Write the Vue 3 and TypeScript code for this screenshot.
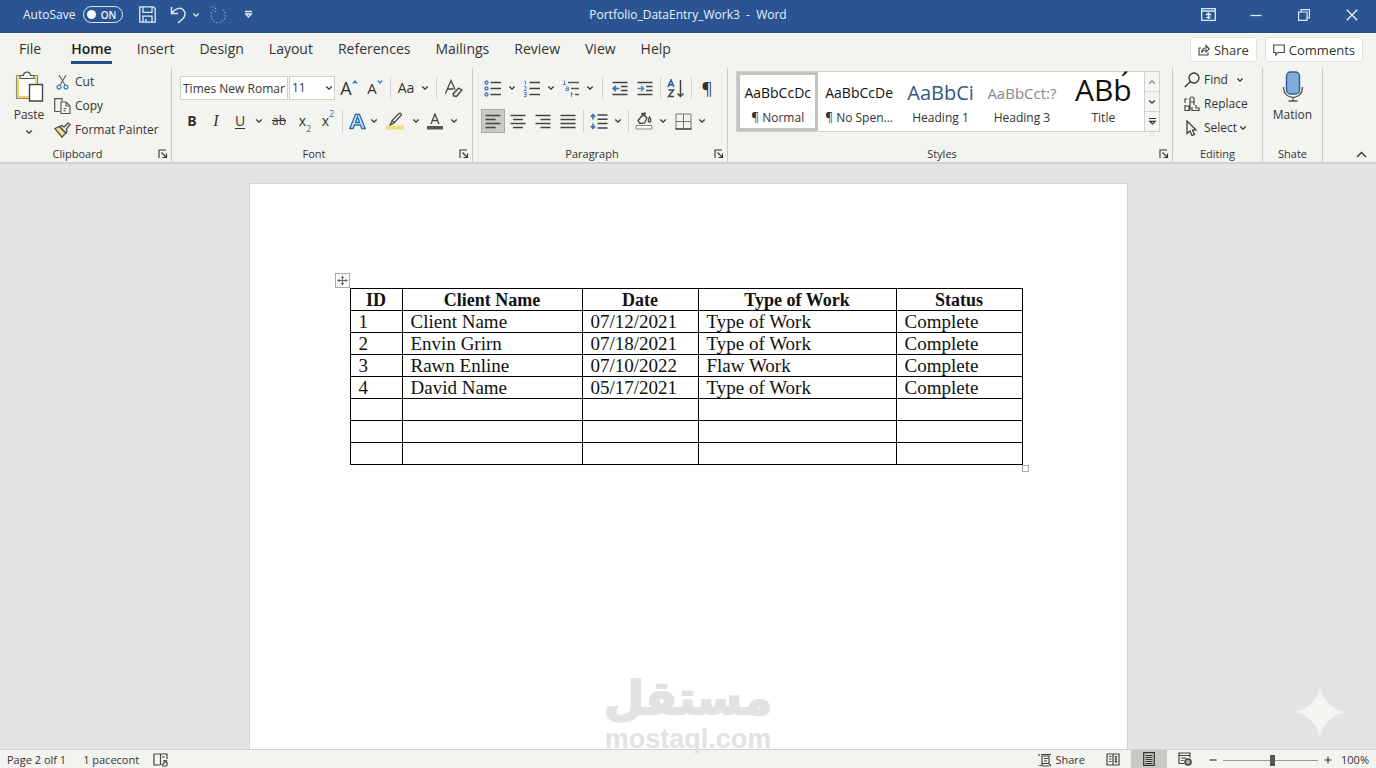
<script setup lang="ts">
import { ref } from 'vue'

interface Entry { id: string; client: string; date: string; work: string; status: string }
interface StyleTile { sample: string; name: string; kind: string }

const tabs: string[] = ['File', 'Home', 'Insert', 'Design', 'Layout', 'References', 'Mailings', 'Review', 'View', 'Help']
const activeTab = ref('Home')
const fontName = ref('Times New Roman')
const fontSize = ref('11')
const zoom = ref(52)

const tiles: StyleTile[] = [
  { sample: 'AaBbCcDc', name: '¶ Normal', kind: 'plain' },
  { sample: 'AaBbCcDe', name: '¶ No Spen...', kind: 'plain' },
  { sample: 'AaBbCi', name: 'Heading 1', kind: 'heading1' },
  { sample: 'AaBbCct:?', name: 'Heading 3', kind: 'heading3' },
  { sample: 'ABb\u0301', name: 'Title', kind: 'title' },
]
const activeTile = ref('¶ Normal')

const columns: string[] = ['ID', 'Client Name', 'Date', 'Type of Work', 'Status']
const blank: Entry = { id: '', client: '', date: '', work: '', status: '' }
const entries: Entry[] = [
  { id: '1', client: 'Client Name', date: '07/12/2021', work: 'Type of Work', status: 'Complete' },
  { id: '2', client: 'Envin Grirn', date: '07/18/2021', work: 'Type of Work', status: 'Complete' },
  { id: '3', client: 'Rawn Enline', date: '07/10/2022', work: 'Flaw Work', status: 'Complete' },
  { id: '4', client: 'David Name', date: '05/17/2021', work: 'Type of Work', status: 'Complete' },
  blank, blank, blank,
]
</script>

<template>
  <div class="app">
    <svg class="defs" aria-hidden="true">
      <symbol id="chev" viewBox="0 0 8 8"><path d="M1.3 2.5 4 5.2 6.7 2.5" fill="none" stroke="currentColor" stroke-width="1.3" /></symbol>
      <symbol id="launch" viewBox="0 0 10 10"><path d="M1 9V1h7M3.5 3.5l4.5 4.5M8.5 4.5v4h-4" fill="none" stroke="currentColor" stroke-width="1.1" /></symbol>
    </svg>

    <header class="titlebar">
      <div class="quick">
        <label class="autosave">AutoSave
          <input class="toggle-input" type="checkbox" checked />
          <span class="toggle"><i class="dot"></i>ON</span>
        </label>
        <button class="tb save" aria-label="Save">
          <svg width="17" height="17" viewBox="0 0 17 17" fill="none" stroke="#dcebfa" stroke-width="1.3"><path d="M.8.8h13.6l1.8 1.8v13.6H.8zM4 .8v5.6h9V.8M4 16v-5.8h9V16M7 16v-3" /></svg>
        </button>
        <button class="tb undo" aria-label="Undo">
          <svg width="17" height="18" viewBox="0 0 17 18" fill="none" stroke="#dcebfa" stroke-width="1.5"><path d="M1.5 1v6.5H8M1.8 7.2C5 2.500 10 .8 13.500 4c3 3 1.500 7-1.500 9.500L8 17" /></svg>
        </button>
        <button class="tb tiny" aria-label="Undo list"><svg class="chev"><use href="#chev" /></svg></button>
        <button class="tb redo" aria-label="Redo">
          <svg width="18" height="18" viewBox="0 0 18 18" fill="none" stroke="#8eaede" stroke-width="1.200" stroke-dasharray="1.200 1.800"><path d="M1.500 1h5v5M4.500 4a7.200 7.200 0 1 0 9.500 0" /></svg>
        </button>
        <button class="tb" aria-label="Customize toolbar">
          <svg width="9" height="9" viewBox="0 0 9 9" fill="none" stroke="#dcebfa" stroke-width="1.300"><path d="M1 1.500h7M1.700 4h5.600L4.500 7z" /></svg>
        </button>
      </div>
      <h1 class="doc-name">Portfolio_DataEntry_Work3&nbsp; -&nbsp; Word</h1>
      <div class="window-buttons">
        <button aria-label="Ribbon display options">
          <svg width="15" height="13" viewBox="0 0 15 13" fill="none" stroke="#dcebfa" stroke-width="1.300"><path d="M.7.700h13.600v11.600H.7zM.7 3h13.600M7.500 11V5M5 7.300l2.500-2.500L10 7.300M5.500 9.500h4" /></svg>
        </button>
        <button aria-label="Minimize"><svg width="12" height="12" viewBox="0 0 12 12" stroke="#dcebfa" stroke-width="1.300"><path d="M.5 6.500h11" /></svg></button>
        <button aria-label="Restore"><svg width="12" height="12" viewBox="0 0 12 12" fill="none" stroke="#dcebfa" stroke-width="1.200"><path d="M.6 3h8.400v8.400H.6zM3 3V.600h8.400V9H9" /></svg></button>
        <button aria-label="Close"><svg width="12" height="12" viewBox="0 0 12 12" stroke="#e8f2fc" stroke-width="1.300"><path d="M.8.800l10.400 10.400M11.200.800.800 11.200" /></svg></button>
      </div>
    </header>

    <nav class="tabs">
      <button v-for="t in tabs" :key="t" class="tab" :class="{ active: t === activeTab }" @click="activeTab = t"><span>{{ t }}</span></button>
      <div class="tab-actions">
        <button class="card-btn">
          <svg width="12" height="12" viewBox="0 0 12 12" fill="none" stroke="#444" stroke-width="1.100"><path d="M3 4H1v7h9V8.500M3.500 8.500c0-3 2-4.500 4.500-4.500V1.500l3.300 3.500L8 8V6C6 6 4.500 6.500 3.500 8.500z" /></svg>Share
        </button>
        <button class="card-btn">
          <svg width="12" height="12" viewBox="0 0 12 12" fill="none" stroke="#444" stroke-width="1.100"><path d="M.7 1h10.600v7.500H5L2.700 11V8.500H.7z" /></svg>Comments
        </button>
      </div>
    </nav>

    <section class="ribbon">
      <div class="group clipboard">
        <div class="body clip-body">
          <button class="paste">
            <svg width="29" height="31" viewBox="0 0 29 31" fill="none"><path d="M1.500 4.500h21v23h-21z" fill="#fbfbf8" stroke="#8a8a80" stroke-width="1.100" /><path d="M3 6v20h11M21 6v6" stroke="#f0d264" stroke-width="2" /><path d="M5 7.500V4.500h3.500c0-4.500 7-4.500 7 0H19v3z" fill="#f6f6f3" stroke="#555" stroke-width="1.200" /><path d="M14.500 13.500h13V30h-13z" fill="#fff" stroke="#444" stroke-width="1.400" /></svg>
            Paste
            <svg class="chev"><use href="#chev" /></svg>
          </button>
          <div class="stack clip-stack">
            <button class="row-btn">
              <svg width="17" height="16" viewBox="0 0 17 16" fill="none"><path d="M5 1l6 10M12 1 6 11" stroke="#666" stroke-width="1.200" /><circle cx="5" cy="13" r="1.900" stroke="#3f7dbf" stroke-width="1.300" /><circle cx="12" cy="13" r="1.900" stroke="#3f7dbf" stroke-width="1.300" /></svg>Cut
            </button>
            <button class="row-btn">
              <svg width="17" height="16" viewBox="0 0 17 16" fill="none" stroke="#555" stroke-width="1.200"><path d="M6 13.500H.700V.700H8v2.500" /><path d="M7 4h5l4 4v7.500H7z" fill="#fafaf8" /><path d="M12 4v4h4M9.500 10.500h3M9.500 12.700h2" /></svg>Copy
            </button>
            <button class="row-btn">
              <svg width="17" height="16" viewBox="0 0 17 16"><path d="M.8 6.500 5.500 4.500 12 11 8 15.200z" fill="#f2dc83" stroke="#4a4a4a" stroke-width="1.200" /><path d="M5.500 4.500 8 3.500l2 1.500L14 1l2 1.500-3.500 4.500.5 2.500L12 11z" fill="#e6e6e0" stroke="#444" stroke-width="1.200" /></svg>Format Painter
            </button>
          </div>
        </div>
        <footer><span>Clipboard</span><button class="launcher" aria-label="Clipboard options"><svg><use href="#launch" /></svg></button></footer>
      </div>

      <div class="group font">
        <div class="body two-rows">
          <div class="tools">
            <input v-model="fontName" class="font-name" aria-label="Font" />
            <span class="size-wrap">
              <select v-model="fontSize" aria-label="Font size"><option>10</option><option>11</option><option>12</option><option>14</option></select>
              <svg class="chev"><use href="#chev" /></svg>
            </span>
            <button class="t w28 big" aria-label="Grow font">A<svg class="caret" viewBox="0 0 6 4"><path d="M.8 3.500 3 1l2.200 2.500" /></svg></button>
            <button class="t w24 mid" aria-label="Shrink font">A<svg class="caret" viewBox="0 0 6 4"><path d="M.8.500 3 3 5.200.500" /></svg></button>
            <i class="sep narrow"></i>
            <button class="t w24 case">Aa</button><button class="t w14" aria-label="Change case"><svg class="chev"><use href="#chev" /></svg></button>
            <i class="sep"></i>
            <button class="t w24" aria-label="Clear formatting">
              <svg width="19" height="19" viewBox="0 0 19 19" fill="none" stroke="#444" stroke-width="1.300"><path d="M1.500 14.500 7 1.500l4 9M3.500 10h6" /><path d="m9 15 5.500-6 3.500 2-5.500 6.500-3-.500z" fill="#ddd" /></svg>
            </button>
          </div>
          <div class="tools">
            <button class="t w24 bold">B</button><button class="t w24 ital">I</button><button class="t w24 under">U</button><button class="t w14" aria-label="Underline style"><svg class="chev"><use href="#chev" /></svg></button>
            <button class="t w26 strike">ab</button>
            <button class="t w26 script">x<sub>2</sub></button><button class="t w20 script">x<sup>2</sup></button>
            <i class="sep"></i>
            <button class="t w20" aria-label="Text effects">
              <svg width="17" height="17" viewBox="0 0 17 17" fill="#cfe3f5" stroke="#2f69ad" stroke-width="1.300"><path d="M.8 15.500 6.500 1.500h4l5.700 14h-3.400l-1.300-3.500h-6L4.200 15.500zM6.500 9.500h4L8.500 4z" /></svg>
            </button><button class="t w14" aria-label="Effects list"><svg class="chev"><use href="#chev" /></svg></button>
            <button class="t w28" aria-label="Highlight">
              <svg width="20" height="18" viewBox="0 0 20 18"><path d="M1 13.500h18v4H1z" fill="#f3df77" /><path d="M5 13l2-4.500 7-7c1.500-1 3 .5 2 2l-7 7.500zM7 8.500l2.500 2.500" fill="#f4f4f0" stroke="#444" stroke-width="1.200" /></svg>
            </button><button class="t w14" aria-label="Highlight color"><svg class="chev"><use href="#chev" /></svg></button>
            <button class="t w24" aria-label="Font color">
              <svg width="18" height="17" viewBox="0 0 18 17"><path d="M5 11 9 1l4 10M6.300 7.700h5.400" fill="none" stroke="#444" stroke-width="1.300" /><path d="M1 13h16v3.500H1z" fill="#555" /></svg>
            </button><button class="t w14" aria-label="Font color list"><svg class="chev"><use href="#chev" /></svg></button>
          </div>
        </div>
        <footer><span>Font</span><button class="launcher" aria-label="Font options"><svg><use href="#launch" /></svg></button></footer>
      </div>

      <div class="group paragraph">
        <div class="body two-rows">
          <div class="tools spaced">
            <button class="t w24" aria-label="Bullets"><svg width="18" height="17" viewBox="0 0 18 17" fill="none" stroke="#444" stroke-width="1.400"><path d="M6.500 2.500H17M6.500 8.500H17M6.500 14.500H17" /><g stroke="#3d7cc0" stroke-width="1.300"><circle cx="2.500" cy="2.500" r="1.500" /><circle cx="2.500" cy="8.500" r="1.500" /><circle cx="2.500" cy="14.500" r="1.500" /></g></svg></button><button class="t w14" aria-label="Bullet list"><svg class="chev"><use href="#chev" /></svg></button>
            <button class="t w24" aria-label="Numbering"><svg width="18" height="17" viewBox="0 0 18 17" fill="none" stroke="#444" stroke-width="1.400"><path d="M6.500 2.500H17M6.500 8.500H17M6.500 14.500H17" /><path d="M1.500 1h1v3.500M1 6.500h2v2l-2 2h2.500M1 12.500h2.300v4H1M1 14.500h2" stroke="#5e88b5" stroke-width="1" /></svg></button><button class="t w14" aria-label="Number list"><svg class="chev"><use href="#chev" /></svg></button>
            <button class="t w24" aria-label="Multilevel list"><svg width="18" height="17" viewBox="0 0 18 17" fill="none" stroke="#555" stroke-width="1.300"><path d="M6 2.500h11M9 8.500h8M13 14.500h4" /><path d="M1.500 1h1v3.500M1 4.500h3M4 7h2.500v3.500H4V8.500h2M9.500 12v5M8.500 14h2.500" stroke="#5e88b5" stroke-width="1" /></svg></button><button class="t w14" aria-label="Multilevel choices"><svg class="chev"><use href="#chev" /></svg></button>
            <i class="sep"></i>
            <button class="t w24" aria-label="Decrease indent"><svg width="16" height="15" viewBox="0 0 16 15" fill="none" stroke="#444" stroke-width="1.400"><path d="M.5 1.500h15M9 5.500h6.500M9 9.500h6.500M.5 13.500h15" /><path d="M7.500 7.500H1.500M4 4.800 1.300 7.500 4 10.200" stroke="#3574b8" stroke-width="1.700" /></svg></button>
            <button class="t w24" aria-label="Increase indent"><svg width="16" height="15" viewBox="0 0 16 15" fill="none" stroke="#444" stroke-width="1.400"><path d="M.5 1.500h15M9 5.500h6.500M9 9.500h6.500M.5 13.500h15" /><path d="M.5 7.500h6M4 4.800l2.700 2.700L4 10.200" stroke="#4f86bb" stroke-width="1.300" /></svg></button>
            <i class="sep tight"></i>
            <button class="t w24" aria-label="Sort"><svg width="18" height="19" viewBox="0 0 18 19" fill="none" stroke-width="1.500"><path d="M1 8 4 1l3 7M2 5.800h4" stroke="#2f69ad" stroke-width="1.700" /><path d="M1.500 11h5l-5 6.500H7M13.500 1v16.500M10.500 14.500l3 3 3-3" stroke="#444" /></svg></button>
            <i class="sep tight"></i>
            <button class="t w24 pilcrow">¶</button>
          </div>
          <div class="tools spaced">
            <button class="t w24 pressed" aria-label="Align left"><svg width="16" height="15" viewBox="0 0 16 15" stroke="#444" stroke-width="1.500"><path d="M.5 1.500h15M.5 5.500h10M.5 9.500h15M.5 13.500h10" /></svg></button>
            <button class="t w24" aria-label="Center"><svg width="16" height="15" viewBox="0 0 16 15" stroke="#444" stroke-width="1.500"><path d="M.5 1.500h15M3 5.500h10M.5 9.500h15M3 13.500h10" /></svg></button>
            <button class="t w24" aria-label="Align right"><svg width="16" height="15" viewBox="0 0 16 15" stroke="#444" stroke-width="1.500"><path d="M.5 1.500h15M5.500 5.500h10M.5 9.500h15M5.500 13.500h10" /></svg></button>
            <button class="t w24" aria-label="Justify"><svg width="16" height="15" viewBox="0 0 16 15" stroke="#444" stroke-width="1.500"><path d="M.5 1.500h15M.5 5.500h15M.5 9.500h15M.5 13.500h15" /></svg></button>
            <i class="sep tight"></i>
            <button class="t w24" aria-label="Line spacing"><svg width="18" height="17" viewBox="0 0 18 17" fill="none" stroke="#444" stroke-width="1.500"><path d="M7.500 2h10M7.500 6.300h10M7.500 10.600h10M7.500 15h10" /><path d="M3 1.500v5M3 10.500v5M.8 4 3 1.500 5.200 4M.8 13 3 15.500 5.200 13" stroke="#3a75b5" stroke-width="1.600" /></svg></button><button class="t w14" aria-label="Line spacing list"><svg class="chev"><use href="#chev" /></svg></button>
            <i class="sep tight"></i>
            <button class="t w24" aria-label="Shading"><svg width="18" height="18" viewBox="0 0 18 18" fill="none" stroke="#444" stroke-width="1.300"><path d="M3 8.500 8 2.500 12 6 9.500 11 5 11.500zM7 5V1.500l3-.500v4M14.500 5c2 3 1.500 5 0 5s-1.500-2.500 0-5z" /><path d="M1 13.500h16v3.500H1z" fill="#fff" stroke="#888" stroke-width="1" /></svg></button><button class="t w14" aria-label="Shading list"><svg class="chev"><use href="#chev" /></svg></button>
            <button class="t w24" aria-label="Borders"><svg width="17" height="17" viewBox="0 0 17 17" fill="none" stroke="#777" stroke-width="1"><path d="M1 16V1h15v15M8.500 1v15M1 8.500h15" /><path d="M.5 16h16" stroke="#444" stroke-width="1.600" /></svg></button><button class="t w14" aria-label="Borders list"><svg class="chev"><use href="#chev" /></svg></button>
          </div>
        </div>
        <footer><span>Paragraph</span><button class="launcher" aria-label="Paragraph options"><svg><use href="#launch" /></svg></button></footer>
      </div>

      <div class="group styles">
        <div class="body">
          <div class="gallery">
            <button v-for="s in tiles" :key="s.name" class="tile" :class="{ chosen: s.name === activeTile }" @click="activeTile = s.name">
              <span class="sample" :class="s.kind">{{ s.sample }}</span>
              <span>{{ s.name }}</span>
            </button>
            <div class="scroller">
              <button class="faded" aria-label="Previous styles"><svg class="chev flip"><use href="#chev" /></svg></button>
              <button aria-label="Next styles"><svg class="chev"><use href="#chev" /></svg></button>
              <button aria-label="All styles"><svg width="9" height="9" viewBox="0 0 9 9" fill="none" stroke="#333" stroke-width="1.200"><path d="M1 1.500h7M1.800 4.300h5.400L4.500 7z" /></svg></button>
            </div>
          </div>
        </div>
        <footer><span>Styles</span><button class="launcher" aria-label="Styles options"><svg><use href="#launch" /></svg></button></footer>
      </div>

      <div class="group editing">
        <div class="body stack">
          <button class="row-btn"><svg width="16" height="16" viewBox="0 0 16 16" fill="none" stroke="#333" stroke-width="1.300"><circle cx="10" cy="6" r="5" /><path d="M6.500 9.500.8 15" /></svg>Find<svg class="chev far"><use href="#chev" /></svg></button>
          <button class="row-btn"><svg width="16" height="16" viewBox="0 0 16 16" fill="none" stroke="#444" stroke-width="1.200"><path d="M3.500 3H1v4M1 9v5.500h4V10H1M6 14.500V2.500c0-2 4-2 4 0V9M6 6h4M8 11v3.500h7V12h-3V9" /></svg>Replace</button>
          <button class="row-btn"><svg width="16" height="16" viewBox="0 0 16 16" fill="none" stroke="#333" stroke-width="1.200"><path d="M3 1v12.500L6 11l2 4.500 2.500-1L8.500 10H12z" /></svg>Select<svg class="chev near"><use href="#chev" /></svg></button>
        </div>
        <footer><span>Editing</span></footer>
      </div>

      <div class="group voice">
        <div class="body">
          <button class="mic">
            <svg width="22" height="31" viewBox="0 0 22 31" fill="none"><rect x="4.500" y="1" width="13" height="22" rx="4" fill="#80abdb" stroke="#2e5f99" stroke-width="1.400" /><path d="M1.500 16c0 14 19 14 19 0M11 26.500V30M6.500 30h9" stroke="#555" stroke-width="1.300" /></svg>
            Mation
          </button>
        </div>
        <footer><span>Shate</span></footer>
      </div>
      <button class="collapse" aria-label="Collapse the ribbon"><svg width="11" height="7" viewBox="0 0 11 7" fill="none" stroke="#333" stroke-width="1.400"><path d="M1 6l4.500-4.500L10 6" /></svg></button>
    </section>

    <main class="canvas">
      <article class="page">
        <div class="table-box">
          <button class="move" aria-label="Move table"><svg width="11" height="11" viewBox="0 0 11 11" fill="none" stroke="#666" stroke-width="1"><path d="M5.500.500v10M.5 5.500h10M4 2.500h3M4 8.500h3M2.500 4 1 5.500 2.500 7M8.500 4 10 5.500 8.500 7" /></svg></button>
          <table>
            <colgroup><col class="c-id" /><col class="c-client" /><col class="c-date" /><col class="c-work" /><col class="c-status" /></colgroup>
            <thead><tr><th v-for="c in columns" :key="c" scope="col">{{ c }}</th></tr></thead>
            <tbody>
              <tr v-for="(e, i) in entries" :key="i"><td>{{ e.id }}</td><td>{{ e.client }}</td><td>{{ e.date }}</td><td>{{ e.work }}</td><td>{{ e.status }}</td></tr>
            </tbody>
          </table>
          <i class="resize"></i>
        </div>
      </article>
      <div class="watermark"><span class="mark-ar" lang="ar" dir="rtl">مستقل</span><span class="mark-en">mostaql.com</span></div>
      <svg class="sparkle" width="48" height="48" viewBox="0 0 48 48"><path d="M24 0C28 13 35 20 48 24 35 28 28 35 24 48 20 35 13 28 0 24 13 20 20 13 24 0z" fill="#f4f4f1" /></svg>
    </main>

    <footer class="status">
      <span>Page 2 olf 1</span><span class="words">1 pacecont</span>
      <button aria-label="Proofing"><svg width="16" height="14" viewBox="0 0 16 14" fill="none" stroke="#444" stroke-width="1.200"><path d="M7.500 12H1V1h6.500v11M7.500 1H14v5M9 4h3M9 12l5-5M10 8c3-2 6 4 3 5H9" /></svg></button>
      <div class="status-right">
        <button class="share-view"><svg width="14" height="14" viewBox="0 0 14 14" fill="none" stroke="#444" stroke-width="1.200"><path d="M3 1.500h10M4 3h7v7.500H4zM6 5.500h4M6 8h3M1 1v2M1 12v1M2.500 13l2-2M13 13l-2-2M4 13h7" /></svg>Share</button>
        <button class="view" aria-label="Read mode"><svg width="14" height="13" viewBox="0 0 14 13" fill="none" stroke="#444" stroke-width="1.200"><path d="M1 1h12v11H1zM7 1v11M3 3.500h2.500M3 6h2.500M3 8.500h2.500M8.500 3.500H11M8.500 6H11M8.500 8.500H11M10 3v7" /></svg></button>
        <button class="view on" aria-label="Print layout"><svg width="12" height="14" viewBox="0 0 12 14" fill="none" stroke="#333" stroke-width="1.200"><path d="M.7.700h10.600v12.600H.7zM2.500 3.500h7M2.500 5.500h7M2.500 7.500h7M2.500 9.500h7M2.500 11.500h7" /></svg></button>
        <button class="view" aria-label="Web layout"><svg width="14" height="14" viewBox="0 0 14 14" fill="none" stroke="#444" stroke-width="1.200"><path d="M6 11.500H1V1h11v4.500M1 3.500h11M3 6h5M3 8.500h2.500" /><circle cx="10" cy="10" r="3" fill="#aaa" stroke-width="1.600" /></svg></button>
        <button class="step" aria-label="Zoom out"><svg width="8" height="8" viewBox="0 0 8 8" stroke="#333" stroke-width="1.200"><path d="M.5 4h7" /></svg></button>
        <input v-model="zoom" type="range" min="0" max="100" aria-label="Zoom" />
        <button class="step" aria-label="Zoom in"><svg width="8" height="8" viewBox="0 0 8 8" stroke="#333" stroke-width="1.200"><path d="M.5 4h7M4 .500v7" /></svg></button>
        <span class="percent">100%</span>
      </div>
    </footer>
  </div>
</template>

<style>
body { margin: 0; overflow: hidden; }
</style>

<style scoped>
* { box-sizing: border-box; }
.app { height: 100vh; display: flex; flex-direction: column; font-family: "Open Sans", "Noto Sans", sans-serif; font-size: 12px; line-height: 16px; color: #333; background: #e4e4e4; }
.defs { position: absolute; width: 0; height: 0; }
button { border: 0; padding: 0; margin: 0; background: none; font: inherit; color: inherit; display: flex; align-items: center; justify-content: center; flex: none; }
svg { flex: none; display: block; }
.chev { width: 8px; height: 8px; }
.flip { transform: rotate(180deg); }

.titlebar { height: 33px; background: #2b5592; border-bottom: 1px solid #244a80; color: #e6f1fc; display: grid; grid-template-columns: 1fr auto 1fr; align-items: center; padding-bottom: 3px; flex: none; }
.quick { display: flex; align-items: center; padding-left: 23px; }
.autosave { display: flex; align-items: center; gap: 8px; position: relative; }
.toggle-input { position: absolute; opacity: 0; right: 0; width: 40px; height: 17px; margin: 0; }
.toggle { width: 40px; height: 17px; border: 1px solid #dcebfa; border-radius: 9px; display: flex; align-items: center; justify-content: space-between; padding: 0 6px 0 3px; font-size: 10px; font-weight: 600; }
.dot { width: 9px; height: 9px; border-radius: 50%; background: #fff; }
.tb { width: 24px; height: 24px; }
.save { margin-left: 12px; }
.undo { margin-left: 7px; }
.tb.tiny { width: 12px; }
.redo { margin: 0 6px 0 4px; }
.doc-name { margin: 0; font-size: 12px; font-weight: 400; }
.window-buttons { display: flex; justify-content: flex-end; }
.window-buttons button { width: 48px; height: 29px; }

.tabs { height: 33px; flex: none; display: flex; gap: 1px; background: #f3f3ef; border-top: 1px solid #fdfdfb; padding-left: 7px; font-size: 14px; line-height: 20px; }
.tab { padding: 0 12px; align-items: flex-start; }
.tab:first-child { margin-right: 5px; }
.tab span { padding: 5px 0 2px; border-bottom: 3px solid transparent; }
.tab.active { color: #1c1c1c; font-weight: 600; }
.tab.active span { border-color: #244c86; }
.tab-actions { margin-left: auto; display: flex; gap: 8px; padding: 3px 13px 0 0; }
.card-btn { height: 25px; background: #fff; border: 1px solid #e0e0dd; border-radius: 3px; padding: 0 7px; gap: 4px; font-size: 13px; }

.ribbon { height: 98px; flex: none; display: flex; background: #f3f3ef; border-bottom: 2px solid #d2d2cf; }
.group { height: 94px; margin-top: 2px; border-right: 1px solid #c9c9c6; display: flex; flex-direction: column; flex: none; }
.body { flex: 1; padding: 0 8px; }
.group footer { display: flex; align-items: center; height: 16px; }
.group footer span { flex: 1; text-align: center; font-size: 11px; }
.launcher { width: 16px; height: 16px; }
.launcher svg { width: 10px; height: 10px; }
.clipboard { width: 172px; }
.clip-body { display: flex; padding: 2px 0 0 13px; }
.paste { flex-direction: column; width: 32px; justify-content: flex-start; gap: 5px; padding-top: 1px; }
.stack { display: flex; flex-direction: column; }
.clip-stack { margin-left: 9px; }
.row-btn { height: 24px; gap: 4px; justify-content: flex-start; }
.far { margin-left: 4px; }
.near { margin-left: -2px; }
.font { width: 301px; }
.paragraph { width: 255px; }
.two-rows { padding: 8px 0 0 8px; display: flex; flex-direction: column; gap: 9px; }
.tools { display: flex; align-items: center; height: 24px; }
.font-name { width: 108px; height: 24px; border: 1px solid #cfcfcc; background: #fff; padding: 0 2px; font: inherit; font-size: 12px; color: inherit; margin-right: 1px; }
.size-wrap { display: flex; align-items: center; position: relative; }
.size-wrap select { appearance: none; width: 46px; height: 24px; border: 1px solid #cfcfcc; border-radius: 0; background: #fff; padding: 0 2px; font: inherit; color: inherit; }
.size-wrap .chev { position: absolute; right: 2px; }
.t { height: 24px; }
.w14 { width: 14px; }
.w20 { width: 20px; }
.w24 { width: 24px; }
.w26 { width: 26px; }
.w28 { width: 28px; }
.big { font-size: 18px; }
.mid { font-size: 15px; }
.caret { width: 6px; height: 4px; margin-bottom: 12px; fill: none; stroke: #3d7cc0; stroke-width: 1.2; }
.case { font-size: 14px; }
.bold { font-weight: 700; font-size: 14px; }
.ital { font-style: italic; font-size: 16px; font-family: "Liberation Serif", serif; }
.under { font-size: 14px; text-decoration: underline; text-underline-offset: 2px; }
.strike { font-size: 12px; text-decoration: line-through; }
.script { font-size: 14px; }
.script sub, .script sup { font-size: 9px; line-height: 9px; color: #3574b8; }
.script sub { align-self: flex-end; }
.script sup { align-self: flex-start; }
.sep { flex: none; width: 1px; height: 22px; background: #cfcfcc; margin: 0 4px; }
.spaced { gap: 1px; }
.spaced .w14 { margin-left: -1px; }
.sep.narrow { margin: 0 3px; }
.sep.tight { margin: 0 2px; }
.pilcrow { font-size: 17px; }
.pressed { background: #c9c9c6; border: 1px solid #aaa; }

.styles { flex: 0 1 445px; }
.styles .body { padding: 3px 12px 0 8px; }
.gallery { display: flex; height: 61px; border: 1px solid #d0d0cd; background: #fff; }
.tile { flex: 1 1 0; min-width: 0; flex-direction: column; justify-content: flex-start; padding: 3px 0 0; border: 3px solid transparent; white-space: nowrap; }
.tile.chosen { border-color: #c3c3c0; }
.sample { height: 32px; line-height: 30px; color: #111; }
.sample.plain { font-size: 14px; }
.sample.heading1 { font-size: 20px; color: #35577f; }
.sample.heading3 { font-size: 15px; color: #888; }
.sample.title { font-size: 30px; line-height: 24px; }
.scroller { width: 15px; display: flex; flex-direction: column; border-left: 1px solid #d0d0cd; background: #f5f5f2; }
.scroller button { flex: 1; border-bottom: 1px solid #d0d0cd; }
.scroller button:last-child { border-bottom: 0; }
.faded { opacity: .6; }
.editing { width: 90px; }
.editing .body { padding: 0 0 0 11px; }
.voice { width: 60px; }
.voice .body { padding: 3px 0 0; }
.mic { width: 100%; flex-direction: column; gap: 5px; font-size: 12px; }
.collapse { margin: auto 9px 4px auto; }

.canvas { flex: 1; min-height: 0; position: relative; display: flex; justify-content: center; padding-top: 19px; }
.page { width: 64%; max-width: 879px; background: #fff; border: 1px solid #d4d4d4; border-bottom: 0; padding: 104px 104px 0 100px; }
.table-box { position: relative; color: #111; }
.move { position: absolute; left: -15px; top: -15px; width: 15px; height: 15px; border: 1px solid #aaa; background: #fafafa; }
.resize { position: absolute; right: -6px; bottom: -7px; width: 7px; height: 7px; border: 1px solid #aaa; background: #fff; }
table { width: 100%; table-layout: fixed; border-collapse: collapse; font-family: "Liberation Serif", serif; font-size: 19px; line-height: 20px; }
.c-id { width: 52px; }
.c-client { width: 180px; }
.c-date { width: 116px; }
.c-work { width: 198px; }
th, td { border: 1px solid #000; height: 22px; padding: 0 8px; white-space: nowrap; text-align: left; }
th { text-align: center; font-size: 18px; }
.watermark { position: absolute; left: 0; right: 0; bottom: -4px; display: flex; flex-direction: column; align-items: center; color: #e2e2e2; pointer-events: none; }
.mark-ar { font-family: "DejaVu Sans", sans-serif; font-weight: 700; font-size: 46px; line-height: 54px; -webkit-text-stroke: 2px #e2e2e2; }
.mark-en { font-family: "Liberation Sans", sans-serif; font-weight: 700; font-size: 27px; line-height: 28px; }
.sparkle { position: absolute; right: 32px; bottom: 13px; }

.status { height: 19px; flex: none; display: flex; align-items: center; background: #f3f3ef; border-top: 1px solid #d0d0cd; padding: 2px 7px 0; font-size: 11px; line-height: 16px; }
.words { margin: 0 14px 0 17px; }
.status-right { margin-left: auto; display: flex; align-items: center; }
.share-view { gap: 3px; margin-right: 10px; }
.view { width: 36px; height: 19px; margin-top: -2px; }
.view.on { background: #c8c8c5; }
.step { width: 20px; }
input[type="range"] { appearance: none; width: 95px; height: 12px; margin: 0; background: linear-gradient(#999, #999) center / 100% 1px no-repeat; }
input[type="range"]::-webkit-slider-thumb { appearance: none; width: 5px; height: 11px; background: #555; }
.percent { margin-left: 3px; min-width: 28px; text-align: right; }
</style>
